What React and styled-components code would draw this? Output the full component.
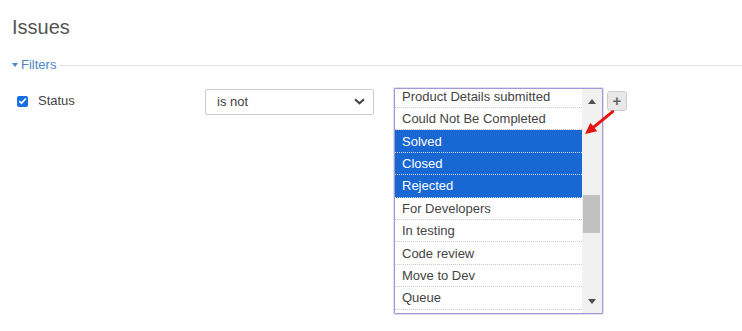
import React from "react";
import styled, { createGlobalStyle } from "styled-components";

const Global = createGlobalStyle`
  html, body { margin: 0; padding: 0; background: #fff; }
  body { font-family: "Liberation Sans", Arial, sans-serif; font-size: 13px; color: #444; }
`;

const Page = styled.div`
  position: relative;
  width: 742px;
  height: 331px;
  padding: 15px 0 0 12px;
  box-sizing: border-box;
  overflow: hidden;
`;

const Title = styled.h2`
  margin: 0;
  font-size: 20px;
  line-height: 24px;
  font-weight: normal;
  color: #555;
`;

const Legend = styled.div`
  display: flex;
  align-items: center;
  margin-top: 17.5px;
  height: 16px;
  line-height: 16px;
`;

const Toggle = styled.span`
  display: inline-block;
  width: 0;
  height: 0;
  border-left: 3px solid transparent;
  border-right: 3px solid transparent;
  border-top: 4px solid #4a86c8;
  margin-right: 3px;
  margin-top: 1px;
`;

const LegendText = styled.span`
  color: #4a86c8;
  font-size: 13px;
`;

const Rule = styled.div`
  flex: 1;
  border-top: 1px solid #e0e0e0;
  margin-left: 3px;
  margin-top: 1px;
`;

const FilterRow = styled.div`
  display: flex;
  align-items: flex-start;
  margin-top: 15px;
`;

const FieldLabel = styled.label`
  width: 193px;
  display: flex;
  align-items: center;
  padding-left: 5px;
  box-sizing: border-box;
  margin-top: 5.5px;
  line-height: 16px;
  color: #444;
`;

const Check = styled.span`
  width: 11px;
  height: 11px;
  border-radius: 2px;
  background: #1a6fe0;
  display: inline-flex;
  align-items: center;
  justify-content: center;
  margin-right: 10px;
`;

const Select = styled.div`
  width: 169px;
  height: 26px;
  box-sizing: border-box;
  border: 1px solid #ccc;
  border-radius: 2px;
  margin-top: 1px;
  display: flex;
  align-items: center;
  justify-content: space-between;
  padding: 0 8px 0 11px;
  color: #444;
  background: #fff;
`;

const ListBox = styled.div`
  margin-left: 20px;
  width: 209px;
  height: 226px;
  box-sizing: border-box;
  border: 1px solid #a598d2;
  box-shadow: 0 0 0 1px rgba(170, 160, 215, 0.35);
  border-radius: 1px;
  display: flex;
  background: #fff;
`;

const Options = styled.div`
  flex: 1;
  overflow: hidden;
  display: flex;
  flex-direction: column;
`;

const Option = styled.div`
  flex: none;
  height: 22.4px;
  box-sizing: border-box;
  border-bottom: 1px dotted #c9c9c9;
  padding-left: 7px;
  display: flex;
  align-items: center;
  white-space: nowrap;
  background: ${(p) => (p.$selected ? "#1967d2" : "transparent")};
  color: ${(p) => (p.$selected ? "#fff" : "#444")};
  border-bottom-color: ${(p) => (p.$selected ? "#c4d6f2" : "#c9c9c9")};
`;

const Scrollbar = styled.div`
  width: 20px;
  flex: none;
  background: #f1f1f1;
  display: flex;
  flex-direction: column;
  align-items: center;
`;

const ArrowUp = styled.span`
  width: 0;
  height: 0;
  border-left: 4.5px solid transparent;
  border-right: 4.5px solid transparent;
  border-bottom: 5px solid #505050;
  margin-top: 10px;
`;

const ArrowDown = styled.span`
  width: 0;
  height: 0;
  border-left: 4.5px solid transparent;
  border-right: 4.5px solid transparent;
  border-top: 5px solid #505050;
  margin-top: auto;
  margin-bottom: 9px;
`;

const Thumb = styled.div`
  width: 17px;
  height: 38px;
  background: #c1c1c1;
  margin-right: 1px;
`;

const AddButton = styled.button`
  margin-left: 4px;
  margin-top: 3px;
  width: 20px;
  height: 20px;
  padding: 0;
  box-sizing: border-box;
  border: 1px solid #ccc;
  border-radius: 3px;
  background: #e8e8e8;
  color: #666;
  font-family: "Liberation Sans", Arial, sans-serif;
  font-size: 15px;
  line-height: 16px;
  font-weight: bold;
  display: flex;
  align-items: center;
  justify-content: center;
`;

const Annotation = styled.svg`
  position: absolute;
  left: 0;
  top: 0;
  pointer-events: none;
`;

const options = [
  { label: "Product Details submitted" },
  { label: "Could Not Be Completed" },
  { label: "Solved", selected: true },
  { label: "Closed", selected: true },
  { label: "Rejected", selected: true },
  { label: "For Developers" },
  { label: "In testing" },
  { label: "Code review" },
  { label: "Move to Dev" },
  { label: "Queue" },
  { label: "" },
];

export default function App() {
  return (
    <>
      <Global />
      <Page>
        <Title>Issues</Title>
        <Legend>
          <Toggle />
          <LegendText>Filters</LegendText>
          <Rule />
        </Legend>
        <FilterRow>
          <FieldLabel>
            <Check>
              <svg width="9" height="8" viewBox="0 0 9 8">
                <path d="M1.3 4.2 L3.5 6.3 L7.8 1.5" fill="none" stroke="#fff" strokeWidth="1.7" />
              </svg>
            </Check>
            Status
          </FieldLabel>
          <Select>
            <span>is not</span>
            <svg width="11" height="7" viewBox="0 0 11 7">
              <path d="M1 1.2 L5.5 5.3 L10 1.2" fill="none" stroke="#444" strokeWidth="2" />
            </svg>
          </Select>
          <ListBox>
            <Options>
              <div style={{ marginTop: -2.8 }} />
              {options.map((o, i) => (
                <Option key={i} $selected={o.selected}>
                  {o.label}
                </Option>
              ))}
            </Options>
            <Scrollbar>
              <ArrowUp />
              <Thumb style={{ marginTop: 91 }} />
              <ArrowDown />
            </Scrollbar>
          </ListBox>
          <AddButton>+</AddButton>
        </FilterRow>
        <Annotation width="742" height="331" viewBox="0 0 742 331">
          <line x1="612.7" y1="111.7" x2="594" y2="126.8" stroke="#e8130f" strokeWidth="3" strokeLinecap="round" />
          <polygon points="585,134 597.2,131.2 590.4,122.7" fill="#e8130f" />
        </Annotation>
      </Page>
    </>
  );
}
